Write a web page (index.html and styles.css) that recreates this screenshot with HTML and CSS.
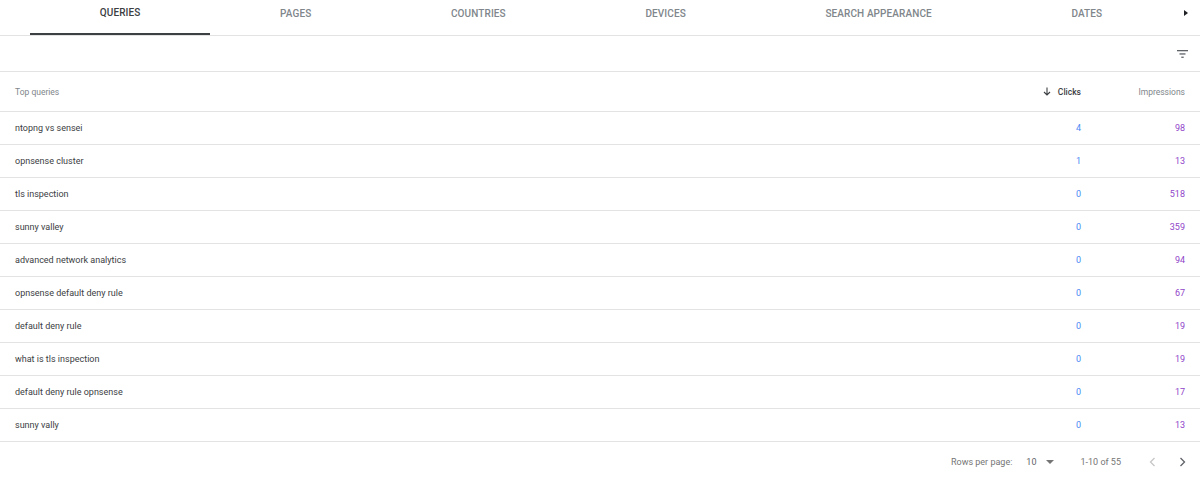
FILE: index.html
```html
<!DOCTYPE html>
<html lang="en">
<head>
    <meta charset="UTF-8">
    <meta name="viewport" content="width=device-width, initial-scale=1.0">
    <title>Performance - Queries</title>
    <link rel="stylesheet" href="styles.css">
</head>
<body>

    <div class="card">
        <!-- Dimension tabs -->
        <div class="tabs">
            <div class="tab-spacer"></div>
            <div class="tab active">Queries</div>
            <div class="tab">Pages</div>
            <div class="tab">Countries</div>
            <div class="tab">Devices</div>
            <div class="tab">Search appearance</div>
            <div class="tab">Dates</div>
            <div class="tab-arrow">
                <svg width="4" height="6" viewBox="0 0 4 6"><path d="M0 0 L4 3 L0 6 Z" fill="#202124"/></svg>
            </div>
        </div>

        <!-- Filter row -->
        <div class="filter-row">
            <svg class="filter-icon" width="11" height="8" viewBox="0 0 11 8">
                <rect x="0" y="0" width="11" height="1.3" fill="#5f6368"/>
                <rect x="2.5" y="3.3" width="6" height="1.3" fill="#5f6368"/>
                <rect x="4.3" y="6.6" width="2.4" height="1.3" fill="#5f6368"/>
            </svg>
        </div>

        <table class="data">
            <thead>
                <tr>
                    <th class="col-query">Top queries</th>
                    <th class="col-num sorted">
                        <svg width="8" height="9" viewBox="0 0 8 9"><path d="M4 0.5 V8 M1 5 L4 8 L7 5" stroke="#3c4043" stroke-width="1.1" fill="none"/></svg>
                        Clicks
                    </th>
                    <th class="col-num col-impr">Impressions</th>
                </tr>
            </thead>
            <tbody id="rows"></tbody>
        </table>

        <!-- Pagination -->
        <div class="pager">
            <span class="pager-label">Rows per page:</span>
            <span class="pager-size">10</span>
            <svg class="pager-drop" width="8" height="4" viewBox="0 0 8 4"><path d="M0 0 L8 0 L4 4 Z" fill="#757575"/></svg>
            <span class="pager-range">1-10 of 55</span>
            <svg class="pager-btn" width="7" height="10" viewBox="0 0 7 10"><path d="M5.5 1 L1.5 5 L5.5 9" stroke="#c6c6c6" stroke-width="1.3" fill="none"/></svg>
            <svg class="pager-btn" width="7" height="10" viewBox="0 0 7 10"><path d="M1.5 1 L5.5 5 L1.5 9" stroke="#5f6368" stroke-width="1.3" fill="none"/></svg>
        </div>
    </div>

    <script>
        const queries = [
            ['ntopng vs sensei', 4, 98],
            ['opnsense cluster', 1, 13],
            ['tls inspection', 0, 518],
            ['sunny valley', 0, 359],
            ['advanced network analytics', 0, 94],
            ['opnsense default deny rule', 0, 67],
            ['default deny rule', 0, 19],
            ['what is tls inspection', 0, 19],
            ['default deny rule opnsense', 0, 17],
            ['sunny vally', 0, 13]
        ];

        const tbody = document.getElementById('rows');
        queries.forEach(q => {
            const tr = document.createElement('tr');
            tr.innerHTML = `<td class="col-query">${q[0]}</td>` +
                `<td class="col-num clicks">${q[1]}</td>` +
                `<td class="col-num impressions">${q[2]}</td>`;
            tbody.appendChild(tr);
        });
    </script>

</body>
</html>
```

FILE: styles.css
```css
body {
    margin: 0;
    font-family: Roboto, Arial, sans-serif;
    background: #fff;
}

.card {
    width: 1200px;
    height: 478px;
    background: #fff;
    border-radius: 0 0 8px 8px;
}

/* Tabs */
.tabs {
    display: flex;
    height: 35px;
    border-bottom: 1px solid #e3e3e3;
}

.tab-spacer {
    width: 30px;
    flex: none;
}

.tab {
    flex: 1 1 auto;
    display: flex;
    align-items: center;
    justify-content: center;
    padding-bottom: 8px;
    box-sizing: border-box;
    font-size: 10px;
    font-weight: 500;
    text-transform: uppercase;
    color: #80868b;
    letter-spacing: 0.1px;
}

.tab.active {
    color: #3c4043;
    border-bottom: 2px solid #3c4043;
}

.tab-arrow {
    width: 28px;
    flex: none;
    display: flex;
    justify-content: center;
    padding-top: 10px;
    box-sizing: border-box;
}

/* Filter row */
.filter-row {
    height: 35px;
    border-bottom: 1px solid #e3e3e3;
    display: flex;
    align-items: center;
    justify-content: flex-end;
    padding-right: 12px;
}

/* Table */
.data {
    width: 100%;
    border-collapse: collapse;
    font-size: 9px;
}

.data th,
.data td {
    border-bottom: 1px solid #e3e3e3;
    padding: 0 15px;
    white-space: nowrap;
}

.data th {
    height: 39px;
    font-size: 8.5px;
    font-weight: 400;
    color: #80868b;
}

.data td {
    height: 32px;
    color: #3c4043;
}

.col-query {
    text-align: left;
}

.col-num {
    text-align: right;
    width: 60px;
}

.data .impressions,
.data th.col-impr {
    width: 74px;
}

.data th.sorted {
    color: #3c4043;
    font-weight: 500;
}

.data th.sorted svg {
    vertical-align: -1px;
    margin-right: 5px;
}

.data td.clicks {
    color: #4a8af4;
}

.data td.impressions {
    color: #9044c9;
}

/* Pagination */
.pager {
    height: 36px;
    display: flex;
    align-items: center;
    justify-content: flex-end;
    padding-top: 3px;
    box-sizing: border-box;
    font-size: 9px;
    color: #757575;
    padding-right: 14px;
}

.pager-label {
    margin-right: 14px;
}

.pager-size {
    color: #5f6368;
    margin-right: 10px;
}

.pager-drop {
    margin-right: 26px;
}

.pager-range {
    margin-right: 28px;
}

.pager-btn + .pager-btn {
    margin-left: 23px;
}
```
